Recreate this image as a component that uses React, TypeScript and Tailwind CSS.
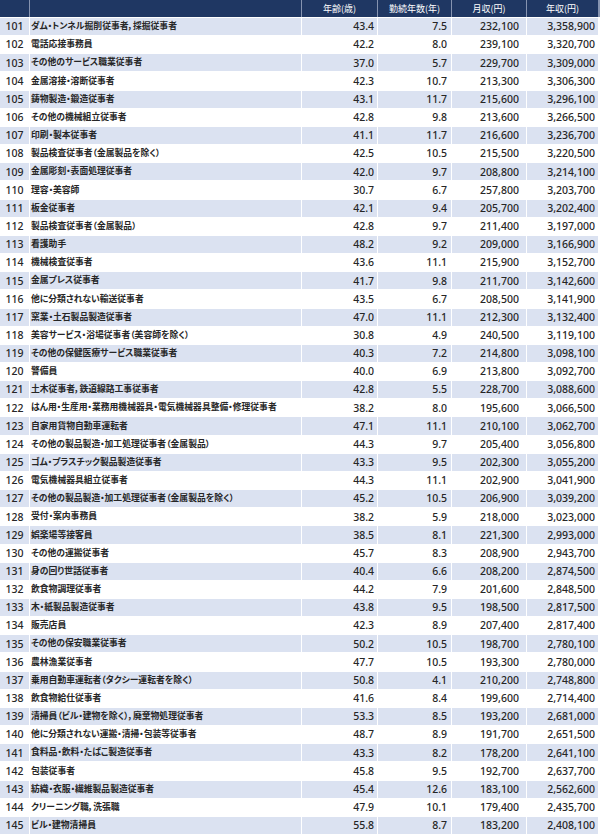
const rows: [number, string, string, string, string, string][] = [
  [101, 'ダム・トンネル掘削従事者，採掘従事者', '43.4', '7.5', '232,100', '3,358,900'],
  [102, '電話応接事務員', '42.2', '8.0', '239,100', '3,320,700'],
  [103, 'その他のサービス職業従事者', '37.0', '5.7', '229,700', '3,309,000'],
  [104, '金属溶接・溶断従事者', '42.3', '10.7', '213,300', '3,306,300'],
  [105, '鋳物製造・鍛造従事者', '43.1', '11.7', '215,600', '3,296,100'],
  [106, 'その他の機械組立従事者', '42.8', '9.8', '213,600', '3,266,500'],
  [107, '印刷・製本従事者', '41.1', '11.7', '216,600', '3,236,700'],
  [108, '製品検査従事者（金属製品を除く）', '42.5', '10.5', '215,500', '3,220,500'],
  [109, '金属彫刻・表面処理従事者', '42.0', '9.7', '208,800', '3,214,100'],
  [110, '理容・美容師', '30.7', '6.7', '257,800', '3,203,700'],
  [111, '板金従事者', '42.1', '9.4', '205,700', '3,202,400'],
  [112, '製品検査従事者（金属製品）', '42.8', '9.7', '211,400', '3,197,000'],
  [113, '看護助手', '48.2', '9.2', '209,000', '3,166,900'],
  [114, '機械検査従事者', '43.6', '11.1', '215,900', '3,152,700'],
  [115, '金属プレス従事者', '41.7', '9.8', '211,700', '3,142,600'],
  [116, '他に分類されない輸送従事者', '43.5', '6.7', '208,500', '3,141,900'],
  [117, '窯業・土石製品製造従事者', '47.0', '11.1', '212,300', '3,132,400'],
  [118, '美容サービス・浴場従事者（美容師を除く）', '30.8', '4.9', '240,500', '3,119,100'],
  [119, 'その他の保健医療サービス職業従事者', '40.3', '7.2', '214,800', '3,098,100'],
  [120, '警備員', '40.0', '6.9', '213,800', '3,092,700'],
  [121, '土木従事者，鉄道線路工事従事者', '42.8', '5.5', '228,700', '3,088,600'],
  [122, 'はん用・生産用・業務用機械器具・電気機械器具整備・修理従事者', '38.2', '8.0', '195,600', '3,066,500'],
  [123, '自家用貨物自動車運転者', '47.1', '11.1', '210,100', '3,062,700'],
  [124, 'その他の製品製造・加工処理従事者（金属製品）', '44.3', '9.7', '205,400', '3,056,800'],
  [125, 'ゴム・プラスチック製品製造従事者', '43.3', '9.5', '202,300', '3,055,200'],
  [126, '電気機械器具組立従事者', '44.3', '11.1', '202,900', '3,041,900'],
  [127, 'その他の製品製造・加工処理従事者（金属製品を除く）', '45.2', '10.5', '206,900', '3,039,200'],
  [128, '受付・案内事務員', '38.2', '5.9', '218,000', '3,023,000'],
  [129, '娯楽場等接客員', '38.5', '8.1', '221,300', '2,993,000'],
  [130, 'その他の運搬従事者', '45.7', '8.3', '208,900', '2,943,700'],
  [131, '身の回り世話従事者', '40.4', '6.6', '208,200', '2,874,500'],
  [132, '飲食物調理従事者', '44.2', '7.9', '201,600', '2,848,500'],
  [133, '木・紙製品製造従事者', '43.8', '9.5', '198,500', '2,817,500'],
  [134, '販売店員', '42.3', '8.9', '207,400', '2,817,400'],
  [135, 'その他の保安職業従事者', '50.2', '10.5', '198,700', '2,780,100'],
  [136, '農林漁業従事者', '47.7', '10.5', '193,300', '2,780,000'],
  [137, '乗用自動車運転者（タクシー運転者を除く）', '50.8', '4.1', '210,200', '2,748,800'],
  [138, '飲食物給仕従事者', '41.6', '8.4', '199,600', '2,714,400'],
  [139, '清掃員（ビル・建物を除く），廃棄物処理従事者', '53.3', '8.5', '193,200', '2,681,000'],
  [140, '他に分類されない運搬・清掃・包装等従事者', '48.7', '8.9', '191,700', '2,651,500'],
  [141, '食料品・飲料・たばこ製造従事者', '43.3', '8.2', '178,200', '2,641,100'],
  [142, '包装従事者', '45.8', '9.5', '192,700', '2,637,700'],
  [143, '紡織・衣服・繊維製品製造従事者', '45.4', '12.6', '183,100', '2,562,600'],
  [144, 'クリーニング職，洗張職', '47.9', '10.1', '179,400', '2,435,700'],
  [145, 'ビル・建物清掃員', '55.8', '8.7', '183,200', '2,408,100'],
];

const grid = 'grid grid-cols-[29px_271px_75px_73px_74px_71px] gap-x-px';

export default function App() {
  return (
    <div
      className="w-[600px] h-[836px] bg-white flex flex-col gap-px [font-feature-settings:'palt'] text-[#262626]"
      style={{ fontFamily: '"Noto Sans CJK JP", "Noto Sans", sans-serif' }}
    >
      {/* header */}
      <div className={`${grid} h-[17px] bg-[#8593b0]`}>
        <div className="bg-[#1f3763]" />
        <div className="bg-[#1f3763]" />
        {['年齢(歳)', '勤続年数(年)', '月収(円)', '年収(円)'].map((h) => (
          <div key={h} className="bg-[#1f3763] text-white text-[9px] flex items-center justify-center leading-none">
            {h}
          </div>
        ))}
      </div>

      {rows.map(([no, name, age, years, month, annual], i) => {
        const bg = i % 2 === 0 ? 'bg-[#dbe2f1]' : 'bg-white';
        const num = `${bg} flex items-center justify-end font-['Noto_Sans',sans-serif] font-medium`;
        return (
          <div key={no} className={`${grid} h-[17.16px] text-[10.5px] leading-none`}>
            <div className={`${bg} flex items-center justify-center font-['Noto_Sans',sans-serif] font-medium`}>{no}</div>
            <div className={`${bg} flex items-center pl-px text-[8.8px] font-bold whitespace-nowrap`}>{name}</div>
            <div className={`${num} pr-[3px]`}>{age}</div>
            <div className={`${num} pr-[4px]`}>{years}</div>
            <div className={`${num} pr-[7px]`}>{month}</div>
            <div className={`${num} pr-[3px]`}>{annual}</div>
          </div>
        );
      })}
    </div>
  );
}
